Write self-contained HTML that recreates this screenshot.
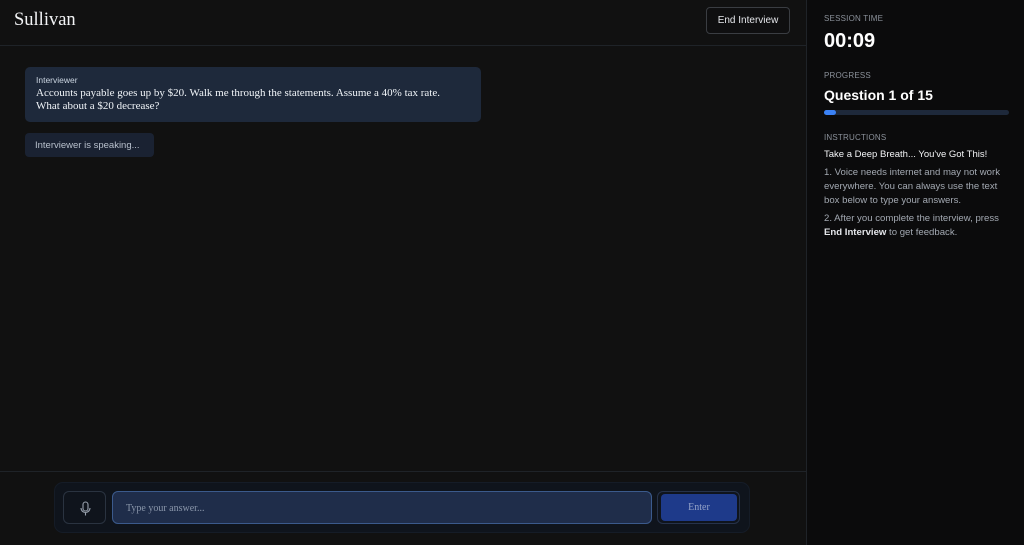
<!DOCTYPE html>
<html><head><style>
*{margin:0;padding:0;box-sizing:border-box}
body{width:1024px;height:545px;background:#111111;font-family:"Liberation Sans",sans-serif;position:relative;overflow:hidden;color:#e5e7eb}
.main{position:absolute;left:0;top:0;width:806px;height:545px;background:#111111}
.hdr{position:absolute;left:0;top:0;width:806px;height:46px;border-bottom:1px solid #1f2328}
.logo{position:absolute;left:14px;top:10px;font-family:"Liberation Serif",serif;font-size:18.5px;color:#f3f4f6}
.end{position:absolute;left:706px;top:7px;width:84px;height:27px;border:1px solid #3a3d42;border-radius:4px;font-size:10px;color:#e5e7eb;text-align:center;line-height:26px;background:#0f0f10}
.msg{position:absolute;left:25px;top:67px;width:456px;height:55px;background:#1e293b;border-radius:5px;padding:8px 30px 8px 11px}
.msg .l{font-size:8.5px;color:#cbd5e1}
.msg .t{font-family:"Liberation Serif",serif;font-size:11px;color:#f1f5f9;line-height:13px;margin-top:2px}
.pill{position:absolute;left:25px;top:133px;width:129px;height:24px;background:#1a2232;border-radius:4px;font-size:9.5px;color:#b8c0cc;padding-left:10px;line-height:26px}
.foot{position:absolute;left:0;top:471px;width:806px;border-top:1px solid #1f2328}
.bar{position:absolute;left:54px;top:482px;width:696px;height:51px;background:#0f141c;border:1px solid #151c27;border-radius:9px}
.mic{position:absolute;left:63px;top:491px;width:43px;height:33px;border:1px solid #2a3340;border-radius:6px;background:#0f141c}
.inp{position:absolute;left:112px;top:491px;width:540px;height:33px;background:#1f2d4a;border:1px solid #3b5a8c;border-radius:6px;font-family:"Liberation Serif",serif;font-size:10px;color:#8a96aa;line-height:33px;padding-left:13px}
.ew{position:absolute;left:657px;top:491px;width:83px;height:33px;border:1px solid #26324a;border-radius:6px}
.eb{position:absolute;left:661px;top:494px;width:76px;height:27px;background:#1e3a8a;border-radius:4px;font-family:"Liberation Serif",serif;font-size:10px;color:#94a3c8;text-align:center;line-height:28px}
.side{position:absolute;left:806px;top:0;width:218px;height:545px;background:#0b0b0c;border-left:1px solid #1f2328}
.cap{font-size:8px;color:#8b919a;letter-spacing:.2px;position:absolute;left:17px}
.time{position:absolute;left:17px;top:30px;font-size:20px;font-weight:bold;color:#fff}
.q{position:absolute;left:17px;top:87px;font-size:14px;font-weight:bold;color:#fff}
.pb{position:absolute;left:17px;top:110px;width:185px;height:5px;background:#1e293b;border-radius:3px}
.pb i{display:block;width:12px;height:5px;background:#3b82f6;border-radius:3px}
.h{position:absolute;left:17px;top:149px;font-size:9.5px;color:#f3f4f6}
.p{position:absolute;left:17px;width:186px;font-size:9.6px;color:#a3a9b2;line-height:14px}
.p b{color:#e5e7eb}
</style></head><body>
<div class="main">
<div class="hdr"><div class="logo">Sullivan</div><div class="end">End Interview</div></div>
<div class="msg"><div class="l">Interviewer</div><div class="t">Accounts payable goes up by $20. Walk me through the statements. Assume a 40% tax rate. What about a $20 decrease?</div></div>
<div class="pill">Interviewer is speaking...</div>
<div class="foot"></div>
<div class="bar"></div>
<div class="mic"><svg width="43" height="33" viewBox="0 0 43 33"><rect x="19" y="10" width="5" height="9" rx="2.5" fill="none" stroke="#9aa3af" stroke-width="1.1"/><path d="M17 16a4.5 4.5 0 0 0 9 0M21.5 20.5v3" fill="none" stroke="#9aa3af" stroke-width="1.1"/></svg></div>
<div class="inp">Type your answer...</div>
<div class="ew"></div>
<div class="eb">Enter</div>
</div>
<div class="side">
<div class="cap" style="top:14px">SESSION TIME</div>
<div class="time">00:09</div>
<div class="cap" style="top:71px">PROGRESS</div>
<div class="q">Question 1 of 15</div>
<div class="pb"><i></i></div>
<div class="cap" style="top:133px">INSTRUCTIONS</div>
<div class="h">Take a Deep Breath... You've Got This!</div>
<div class="p" style="top:166px">1. Voice needs internet and may not work everywhere. You can always use the text box below to type your answers.</div>
<div class="p" style="top:212px">2. After you complete the interview, press <b>End Interview</b> to get feedback.</div>
</div>
</body></html>
